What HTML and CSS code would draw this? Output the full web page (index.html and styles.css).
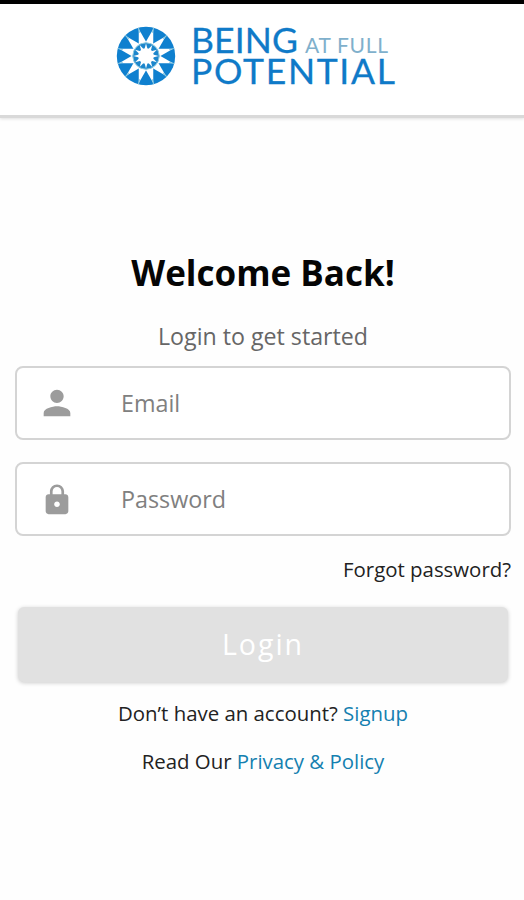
FILE: index.html
```html
<!DOCTYPE html>
<html lang="en">
<head>
  <meta charset="UTF-8" />
  <meta name="viewport" content="width=device-width, initial-scale=1" />
  <title>Being at Full Potential - Login</title>
  <link rel="stylesheet" href="styles.css">
</head>
<body>

  <!-- Header -->
  <header class="header">
    <svg class="emblem" viewBox="-30 -30 60 60">
      <defs>
        <path id="ray" d="M0 -28 L4 -13 H-4 Z" />
        <path id="tooth" d="M0 -12.6 L1.5 -7 H-1.5 Z" />
        <path id="line" d="M0 -29.5 V-24" />
      </defs>
      <circle r="29.2" fill="#0f80cf" />
      <g class="rays" transform="rotate(15)">
        <use href="#ray" /><use href="#ray" transform="rotate(30)" /><use href="#ray" transform="rotate(60)" />
        <use href="#ray" transform="rotate(90)" /><use href="#ray" transform="rotate(120)" /><use href="#ray" transform="rotate(150)" />
        <use href="#ray" transform="rotate(180)" /><use href="#ray" transform="rotate(210)" /><use href="#ray" transform="rotate(240)" />
        <use href="#ray" transform="rotate(270)" /><use href="#ray" transform="rotate(300)" /><use href="#ray" transform="rotate(330)" />
      </g>
      <g class="lines" transform="rotate(15)">
        <use href="#line" /><use href="#line" transform="rotate(30)" /><use href="#line" transform="rotate(60)" />
        <use href="#line" transform="rotate(90)" /><use href="#line" transform="rotate(120)" /><use href="#line" transform="rotate(150)" />
        <use href="#line" transform="rotate(180)" /><use href="#line" transform="rotate(210)" /><use href="#line" transform="rotate(240)" />
        <use href="#line" transform="rotate(270)" /><use href="#line" transform="rotate(300)" /><use href="#line" transform="rotate(330)" />
      </g>
      <circle r="13.2" fill="#1c86cc" stroke="#8fcbe0" />
      <circle r="7.8" fill="#fff" />
      <g class="rays">
        <use href="#tooth" /><use href="#tooth" transform="rotate(30)" /><use href="#tooth" transform="rotate(60)" />
        <use href="#tooth" transform="rotate(90)" /><use href="#tooth" transform="rotate(120)" /><use href="#tooth" transform="rotate(150)" />
        <use href="#tooth" transform="rotate(180)" /><use href="#tooth" transform="rotate(210)" /><use href="#tooth" transform="rotate(240)" />
        <use href="#tooth" transform="rotate(270)" /><use href="#tooth" transform="rotate(300)" /><use href="#tooth" transform="rotate(330)" />
      </g>
    </svg>
    <svg class="wordmark" viewBox="0 0 204 66">
      <text class="word" x="-1" y="30.5" textLength="107" lengthAdjust="spacing">BEING</text>
      <text class="word small" x="113" y="30.5" textLength="83" lengthAdjust="spacing">AT FULL</text>
      <text class="word" x="-1" y="62" textLength="204" lengthAdjust="spacing">POTENTIAL</text>
    </svg>
  </header>

  <!-- Login form -->
  <main class="login">
    <h1>Welcome Back!</h1>
    <p class="subtitle">Login to get started</p>

    <form>
      <label class="field">
        <svg class="icon" viewBox="0 0 24 24"><path d="M12 12c2.21 0 4-1.79 4-4s-1.79-4-4-4-4 1.79-4 4 1.79 4 4 4zm0 2c-2.67 0-8 1.34-8 4v2h16v-2c0-2.66-5.33-4-8-4z" /></svg>
        <input type="email" placeholder="Email">
      </label>
      <label class="field">
        <svg class="icon lock" viewBox="0 0 24 24"><path d="M18 8h-1V6c0-2.76-2.24-5-5-5S7 3.24 7 6v2H6c-1.1 0-2 .9-2 2v10c0 1.1.9 2 2 2h12c1.1 0 2-.9 2-2V10c0-1.1-.9-2-2-2zm-6 9c-1.1 0-2-.9-2-2s.9-2 2-2 2 .9 2 2-.9 2-2 2zm3.1-9H8.9V6c0-1.71 1.39-3.1 3.1-3.1s3.1 1.39 3.1 3.1v2z" /></svg>
        <input type="password" placeholder="Password">
      </label>
      <a class="forgot" href="#">Forgot password?</a>
      <button class="btn" type="button">Login</button>
    </form>

    <p class="note signup">Don’t have an account? <a href="#">Signup</a></p>
    <p class="note privacy">Read Our <a href="#">Privacy &amp; Policy</a></p>
  </main>

</body>
</html>
```

FILE: styles.css
```css
* {
  margin: 0;
  padding: 0;
  box-sizing: border-box;
}

body {
  background: #fefefe;
  color: #222;
  font-family: "Open Sans", sans-serif;
  height: 100vh;
  overflow: hidden;
}

/* Header */
.header {
  display: flex;
  height: 118px;
  padding: 22px 0 0 116px;
  gap: 16px;
  background: #fff;
  border-top: 4px solid #000;
  border-bottom: 3px solid #d9d9d9;
  box-shadow: 0 1px 3px rgba(0,0,0,0.12);
}

.emblem {
  width: 60px;
  height: 60px;
}

.rays {
  fill: #fff;
}

.lines {
  stroke: #8fcbe0;
  stroke-width: 1;
}

.wordmark {
  width: 204px;
  height: 66px;
  margin-top: -4px;
  overflow: visible;
}

.word {
  font-family: Lato, sans-serif;
  font-size: 35.5px;
  fill: #0f7ac8;
  stroke: #0f7ac8;
  stroke-width: 0.3;
}

.word.small {
  font-size: 21px;
  fill: #7fb0cc;
  stroke: none;
}

/* Login form */
.login {
  padding: 131px 13px 0 15px;
  text-align: center;
}

h1 {
  color: #050505;
  font-size: 35px;
  font-weight: 700;
  line-height: 48px;
}

.subtitle {
  margin-top: 23px;
  color: #666;
  font-size: 23.2px;
  line-height: 32px;
}

form {
  display: flex;
  flex-direction: column;
  margin-top: 14px;
}

.field {
  display: flex;
  align-items: center;
  height: 74px;
  margin-bottom: 22px;
  padding-left: 20px;
  gap: 44px;
  background: #fff;
  border: 2px solid #d4d4d4;
  border-radius: 8px;
}

.icon {
  width: 40px;
  height: 40px;
  fill: #9c9c9c;
}

.icon.lock {
  width: 34px;
  height: 34px;
  margin: 2px 3px 0;
}

.field input {
  flex: 1;
  border: none;
  outline: none;
  background: none;
  font: 23.3px "Open Sans", sans-serif;
}

.field input::placeholder {
  color: #808080;
}

.forgot {
  align-self: flex-end;
  margin-top: -3px;
  color: #222;
  font-size: 20.4px;
  line-height: 28px;
  text-decoration: none;
}

.btn {
  height: 75px;
  margin: 24px 3px 0;
  padding-bottom: 2px;
  border: none;
  border-radius: 6px;
  background: #e1e1e1;
  box-shadow: 0 1px 4px rgba(0,0,0,0.2);
  color: #fff;
  font: 28.5px "Open Sans", sans-serif;
  letter-spacing: 2px;
}

.note {
  font-size: 20.4px;
  line-height: 28px;
}

.note a {
  color: #1480b0;
  text-decoration: none;
}

.signup {
  margin-top: 17px;
}

.privacy {
  margin-top: 20px;
}
```
